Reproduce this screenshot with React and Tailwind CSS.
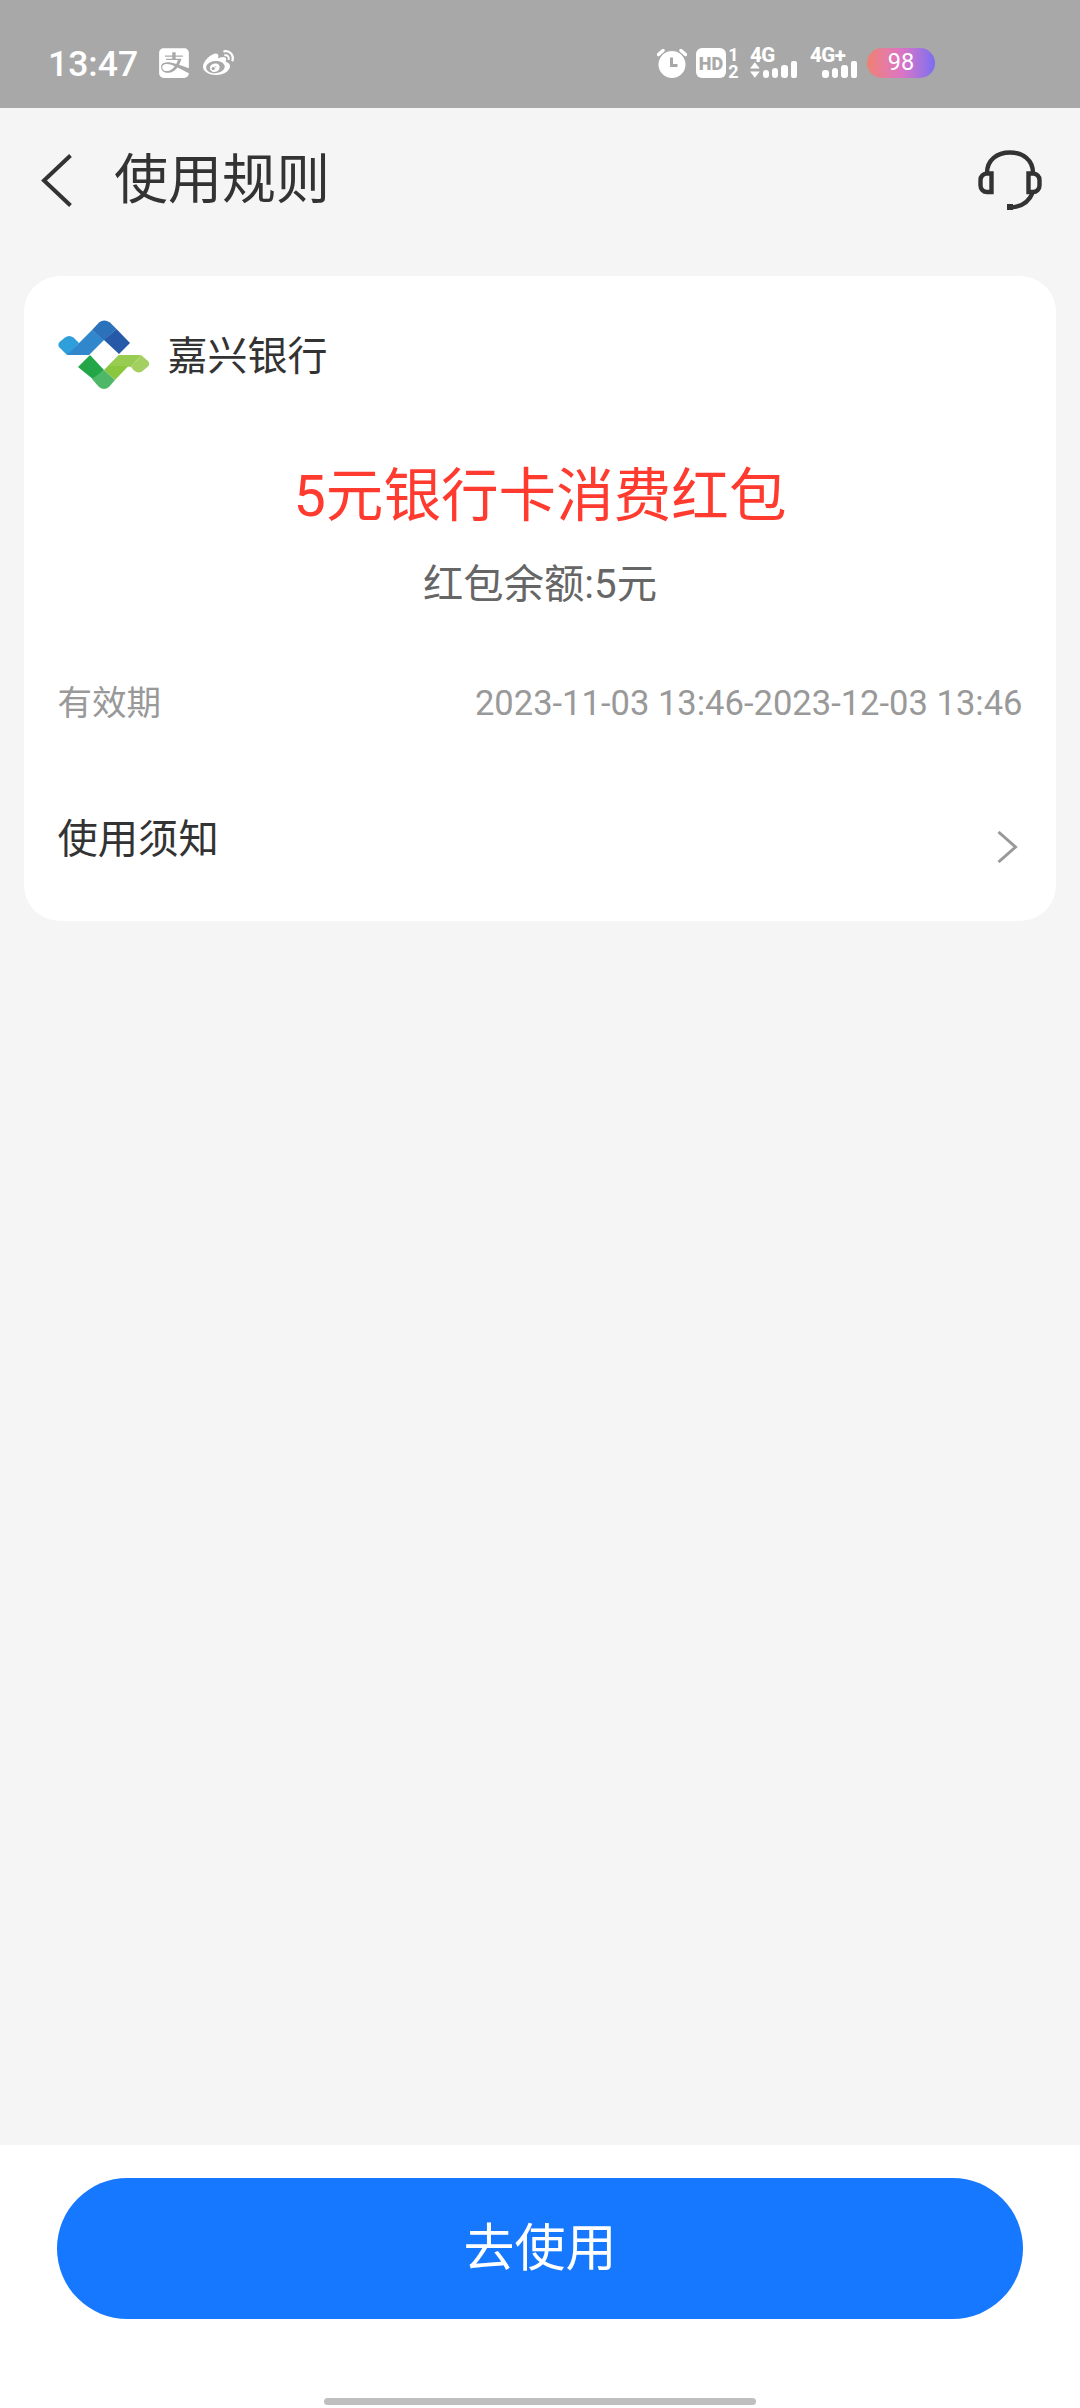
import React from 'react';
import { FaAlipay, FaWeibo } from 'react-icons/fa';

const AlarmIcon = () => (
  <svg width="30" height="30" viewBox="0 0 30 30" fill="none">
    <circle cx="15" cy="16.5" r="13.5" fill="#fff" />
    <path d="M1.500 6.500 6 2.500M28.500 6.500 24 2.500" stroke="#fff" strokeWidth="3.4" strokeLinecap="round" />
    <path d="M14.500 9.500v8h6" stroke="#a8a8a8" strokeWidth="3" />
  </svg>
);

const Signal = ({ label, arrows }) => (
  <div className="flex h-[30px] w-[47px] flex-col justify-between">
    <div className="h-[13px] text-[20.500px] leading-[15px] font-extrabold tracking-[-0.5px] whitespace-nowrap">{label}</div>
    <div className="flex items-end justify-end gap-[3px]">
      {arrows && (
        <svg width="10" height="16" viewBox="0 0 10 16" fill="#fff" className="mr-auto">
          <path d="M5 0l5 6.500H0zM5 16l5-6.500H0z" />
        </svg>
      )}
      <div className="h-[8px] w-[6.500px] rounded-[3px] bg-white" />
      <div className="h-[10px] w-[6.500px] rounded-[3px] bg-white" />
      <div className="h-[13px] w-[6.500px] rounded-[3px] bg-white" />
      <div className="h-[17px] w-[6.500px] rounded-[2px] bg-white" />
    </div>
  </div>
);

const StatusBar = () => (
  <div className="flex h-[108px] items-center bg-[#a8a8a8] pt-[18px] pl-[48px] text-white">
    <span className="w-[111px] pt-[3px] text-[35.500px] leading-none font-medium">13:47</span>
    <FaAlipay className="h-[34px] w-[30px]" />
    <FaWeibo className="ml-[14px] h-[31px] w-[31px]" />
    <div className="ml-auto flex items-center pr-[145px]">
      <AlarmIcon />
      <div className="ml-[9px] flex h-[30px] w-[30px] items-center justify-center rounded-[6px] bg-white pt-[1px] text-[18px] font-black text-[#a8a8a8]">
        HD
      </div>
      <div className="ml-[2px] flex h-[30px] w-[11px] flex-col items-center justify-between text-[18px] leading-[14px] font-bold">
        <span className="h-[14px]">1</span>
        <span className="h-[13px]">2</span>
      </div>
      <div className="ml-[11px]">
        <Signal label="4G" arrows />
      </div>
      <div className="ml-[13px]">
        <Signal label="4G+" />
      </div>
      <div className="ml-[10px] flex h-[30px] w-[68px] items-center justify-center rounded-full bg-linear-to-r from-[#f0806f] via-[#dd74c4] to-[#7b6cf0] text-[23.500px] leading-none">
        98
      </div>
    </div>
  </div>
);

const HeadsetIcon = () => (
  <svg width="64" height="62" viewBox="0 0 64 62" fill="none" stroke="#333" strokeWidth="4.4">
    <path d="M9 23C9 10 19 2.500 32 2.500S55 10 55 23" />
    <path d="M13.500 23.500H9a6.500 6.500 0 0 0-6.500 6.500v5.500A6.500 6.500 0 0 0 9 42h4.500z" />
    <path d="M50.500 23.500H55a6.500 6.500 0 0 1 6.500 6.500v5.500A6.500 6.500 0 0 1 55 42h-4.500z" />
    <path d="M55 42C51 52 43 57.500 31 57.500" />
    <path d="M29 57h6" strokeWidth="6" />
  </svg>
);

const BankLogo = () => (
  <svg width="92" height="70" viewBox="0 0 92 70">
    <path d="M1.500 22 7 17.500Q11 14.500 15.500 17.500L21 23 10 34.500H8.500L1 27Q-.5 24.500 1.500 22z" fill="#2f9fdb" />
    <path d="M21 23 34 10 46 20 31 35H8.500z" fill="#3187cb" />
    <path d="M34 10 41 2.500Q46-1.500 52 2.500L58.500 9 46 20.500z" fill="#2b72ba" />
    <path d="M58.500 9 72 23 61 34 46 20z" fill="#2659a8" />
    <path d="M32 35 46 50 36 60 20 47z" fill="#22a647" />
    <path d="M46 50 57 60 51 67Q46 71 41 67L34 59z" fill="#4fb768" />
    <path d="M46 50 61 35H81L57 60z" fill="#8bc63f" />
    <path d="M61 35H83L73 47 66 46H50z" fill="#97cc50" />
    <path d="M83 35 90 41Q92.500 44 90 46.500L84 51.500Q80 54 76 50.500L73 47z" fill="#a4d062" />
  </svg>
);

const NavBar = () => (
  <div className="flex h-[168px] items-start px-[38px]">
    <svg width="37" height="53" viewBox="0 0 37 53" fill="none" className="mt-[46px]">
      <path d="M32.500 1.500 6 26.500l26.500 25" stroke="#333" strokeWidth="4" />
    </svg>
    <h1 className="mt-[38px] ml-[39px] text-[54px] leading-[70px] text-[#333]">使用规则</h1>
    <div className="mt-[42px] ml-auto">
      <HeadsetIcon />
    </div>
  </div>
);

const CouponCard = () => (
  <div className="mx-[24px] h-[645px] rounded-[36px] bg-white px-[33.500px] pt-[44px]">
    <div className="flex h-[70px] items-center">
      <BankLogo />
      <span className="ml-[18px] pt-[4px] text-[40px] leading-[58px] text-[#333]">嘉兴银行</span>
    </div>
    <div className="mt-[67px] text-center text-[57.600px] leading-[80px] text-[#ff3b30]">5元银行卡消费红包</div>
    <div className="mt-[18px] text-center text-[40.300px] leading-[60px] text-[#666]">红包余额:5元</div>
    <div className="mt-[63px] flex justify-between text-[34.560px] leading-[50px] text-[#999]">
      <span>有效期</span>
      <span>2023-11-03 13:46-2023-12-03 13:46</span>
    </div>
    <div className="mt-[82px] flex justify-between">
      <span className="text-[40.300px] leading-[60px] text-[#333]">使用须知</span>
      <svg width="22" height="32" viewBox="0 0 22 32" fill="none" className="mt-[21px] mr-[4px]">
        <path d="M1.500 1 18.500 16 1.500 31" stroke="#999" strokeWidth="3" />
      </svg>
    </div>
  </div>
);

const App = () => {
  return (
    <div className="flex h-[2408px] w-[1080px] flex-col overflow-hidden bg-[#f5f5f5] font-[Roboto,'Noto_Sans_CJK_SC',sans-serif]">
      <StatusBar />
      <NavBar />
      <CouponCard />
      <div className="mt-auto flex h-[263px] flex-col items-center bg-white pt-[33px]">
        <button className="h-[141px] w-[966px] rounded-full bg-[#1677ff] text-[51px] leading-[70px] text-white">
          去使用
        </button>
        <div className="mt-auto mb-[3px] h-[7px] w-[432px] rounded-full bg-[#bfbfbf]" />
      </div>
    </div>
  );
};

export default App;
